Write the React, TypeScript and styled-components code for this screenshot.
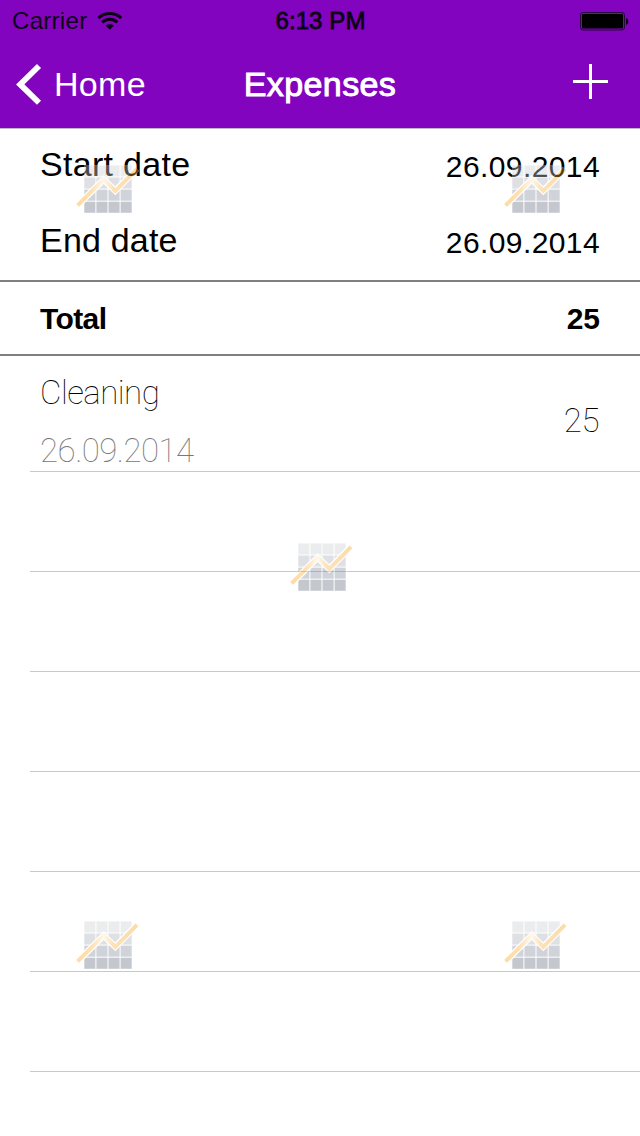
import React from "react";
import styled, { createGlobalStyle } from "styled-components";

const GlobalStyle = createGlobalStyle`
  body { margin: 0; background: #fff; }
  * { box-sizing: border-box; }
`;

const Screen = styled.div`
  position: relative;
  width: 640px;
  height: 1136px;
  overflow: hidden;
  background: #fff;
  color: #000;
  font-family: "Liberation Sans", Arial, sans-serif;
`;

const Header = styled.header`
  height: 129px;
  background: #8304bf;
  border-bottom: 1px solid #c3b5ca;
`;

const StatusBar = styled.div`
  display: grid;
  grid-template-columns: 1fr auto 1fr;
  height: 40px;
  padding: 0 11px 0 12px;
  align-items: center;
  color: #0c0016;
`;

const NavBar = styled.nav`
  display: grid;
  grid-template-columns: 1fr auto 1fr;
  height: 88px;
  padding: 0 32px 0 16px;
  align-items: center;
  color: #fff;
`;

const NavTitle = styled.div`
  padding-left: 16px;
`;

const AddIcon = styled.svg`
  margin-bottom: 4px;
`;

const Cluster = styled.div<{ $gap: number; $end?: boolean }>`
  display: flex;
  align-items: center;
  gap: ${(p) => p.$gap}px;
  justify-content: ${(p) => (p.$end ? "flex-end" : "flex-start")};
`;

const Text = styled.span<{ $size: number; $track?: number; $stroke?: number; $top?: number }>`
  font-size: ${(p) => p.$size}px;
  line-height: 40px;
  letter-spacing: ${(p) => p.$track ?? 0}px;
  -webkit-text-stroke: ${(p) => p.$stroke ?? 0}px currentColor;
  padding-top: ${(p) => p.$top ?? 0}px;
  white-space: nowrap;
`;

const DateRow = styled.div`
  display: flex;
  justify-content: space-between;
  align-items: flex-start;
  height: 76px;
  padding: 15px 40px 0 40px;
`;

const TotalRow = styled.div`
  display: flex;
  justify-content: space-between;
  align-items: center;
  height: 76px;
  margin-top: -1px;
  padding: 2px 40px 0;
  border-top: 2px solid #808080;
  border-bottom: 2px solid #808080;
  font-weight: bold;
`;

const ExpenseRow = styled.div`
  display: flex;
  justify-content: space-between;
  height: 116px;
  margin-left: 30px;
  padding: 17px 41px 0 10px;
  border-bottom: 1px solid #c8c8c8;
  font-family: Roboto, sans-serif;
  font-weight: 100;
`;

const Stack = styled.div`
  display: flex;
  flex-direction: column;
  gap: 18px;
`;

const Muted = styled(Text)`
  color: #777;
`;

const EmptyRow = styled.div`
  height: 100px;
  margin-left: 30px;
  border-bottom: 1px solid #c8c8c8;
`;

const Watermark = styled.svg<{ $x: number; $y: number }>`
  position: absolute;
  left: ${(p) => p.$x}px;
  top: ${(p) => p.$y}px;
`;

const shades = ["#c9cdd1", "#a5abb5", "#808897", "#5f6979"];

function Chart({ x, y }: { x: number; y: number }) {
  const id = `line-${x}-${y}`;
  const points = "1.6,41.4 27.7,15.4 39.3,26.8 61,4.8";
  return (
    <Watermark $x={x} $y={y} width="64" height="52" viewBox="0 0 64 52" opacity="0.36">
      <defs>
        <linearGradient id={id} gradientUnits="userSpaceOnUse" x1="2" y1="0" x2="62" y2="0">
          <stop offset="0" stopColor="#fa9e0c" />
          <stop offset="0.22" stopColor="#fbaa30" />
          <stop offset="0.43" stopColor="#ffeccc" />
          <stop offset="0.58" stopColor="#fbb03c" />
          <stop offset="1" stopColor="#fa9e0c" />
        </linearGradient>
      </defs>
      <rect x="8" y="1" width="49" height="49" fill="#fff" />
      {shades.map((fill, row) =>
        [0, 1, 2, 3].map((col) => (
          <rect key={`${row}-${col}`} x={8.3 + col * 12.1} y={1.4 + row * 12.1} width="11.1" height="11.1" fill={fill} />
        ))
      )}
      <polyline points={points} fill="none" stroke="#fff" strokeWidth="6.4" />
      <polyline points={points} fill="none" stroke={`url(#${id})`} strokeWidth="4" />
    </Watermark>
  );
}

const marks = [
  [76, 164],
  [504, 164],
  [290, 542],
  [76, 920],
  [504, 920],
];

export default function App() {
  return (
    <Screen>
      <GlobalStyle />
      <Header>
        <StatusBar>
          <Cluster $gap={10}>
            <Text $size={24} $track={0.3} $top={1}>Carrier</Text>
            <svg width="26" height="20" viewBox="0 0 26 20">
              <g fill="none" stroke="#0c0016" strokeWidth="3.2">
                <path d="M1.4 7.1A16.4 16.4 0 0 1 24.2 7.1" />
                <path d="M5.2 11.3A11 11 0 0 1 20.4 11.3" />
              </g>
              <path d="M8.6 14.6A6.2 6.2 0 0 1 17 14.6L12.8 18.8Z" fill="#0c0016" />
            </svg>
          </Cluster>
          <Text $size={24} $track={0.1} $stroke={0.8} $top={1}>6:13 PM</Text>
          <Cluster $gap={0} $end>
            <svg width="50" height="20" viewBox="0 0 50 20">
              <rect x="1.5" y="1.5" width="44" height="17.5" rx="2.5" fill="none" stroke="#2a0640" />
              <rect x="3" y="3" width="41" height="14.5" rx="1" fill="#000" />
              <path d="M47 7.2C50 7.2 50 13.8 47 13.8Z" fill="#0c0016" />
            </svg>
          </Cluster>
        </StatusBar>
        <NavBar>
          <Cluster $gap={12}>
            <svg width="26" height="42" viewBox="0 0 26 42">
              <path d="M23 3L4.2 21.4L23 39.8" fill="none" stroke="#fff" strokeWidth="5.8" />
            </svg>
            <Text $size={34} $track={0.3}>Home</Text>
          </Cluster>
          <NavTitle>
            <Text $size={34} $track={0.4} $stroke={1}>Expenses</Text>
          </NavTitle>
          <Cluster $gap={0} $end>
            <AddIcon width="36" height="36" viewBox="0 0 36 36">
              <path d="M1 17.5H36M18.5 0V35" stroke="#fff" strokeWidth="3" />
            </AddIcon>
          </Cluster>
        </NavBar>
      </Header>
      <DateRow>
        <Text $size={34} $track={0.3}>Start date</Text>
        <Text $size={30} $track={0.4} $top={3}>26.09.2014</Text>
      </DateRow>
      <DateRow>
        <Text $size={34} $track={0.2}>End date</Text>
        <Text $size={30} $track={0.4} $top={3}>26.09.2014</Text>
      </DateRow>
      <TotalRow>
        <Text $size={30} $track={-0.6}>Total</Text>
        <Text $size={30}>25</Text>
      </TotalRow>
      <ExpenseRow>
        <Stack>
          <Text $size={33} $track={-0.5}>Cleaning</Text>
          <Muted $size={33} $track={-0.5}>26.09.2014</Muted>
        </Stack>
        <Text $size={33} $track={-0.5} $top={28}>25</Text>
      </ExpenseRow>
      {[0, 1, 2, 3, 4, 5].map((i) => (
        <EmptyRow key={i} />
      ))}
      {marks.map(([x, y]) => (
        <Chart key={`${x}-${y}`} x={x} y={y} />
      ))}
    </Screen>
  );
}
